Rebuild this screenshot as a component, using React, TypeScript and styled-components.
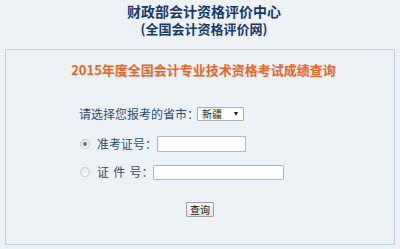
import React, { useState } from "react";
import styled, { createGlobalStyle } from "styled-components";

const GlobalStyle = createGlobalStyle`
  html, body {
    margin: 0;
    padding: 0;
    background: #edf2f7;
  }
  body {
    font-family: "Noto Sans CJK SC", "Noto Sans", sans-serif;
  }
`;

const Page = styled.div`
  width: 400px;
  height: 249px;
  background: #edf2f7;
  display: flex;
  flex-direction: column;
  overflow: hidden;
`;

const Header = styled.div`
  padding: 2px 0 0 8px;
  display: flex;
  flex-direction: column;
  align-items: center;
  color: #17396a;
  font-weight: 700;
`;

const HeaderLine = styled.div<{ $size: number }>`
  font-size: ${(p) => p.$size}px;
  line-height: 18px;
  height: 18px;
  white-space: nowrap;
`;

const Panel = styled.div`
  margin: 11px 5px 0 5px;
  height: 194px;
  border: 1px solid #b6d3e7;
  display: flex;
  flex-direction: column;
`;

const PanelTitle = styled.h2`
  margin: 10px 0 0 0;
  padding-left: 7px;
  text-align: center;
  font-size: 13px;
  line-height: 20px;
  font-weight: 700;
  color: #f1621f;
  white-space: nowrap;
`;

const Form = styled.form`
  padding-left: 73px;
  display: flex;
  flex-direction: column;
`;

const Row = styled.div<{ $mt: number; $indent?: number }>`
  margin-top: ${(p) => p.$mt}px;
  padding-left: ${(p) => p.$indent ?? 0}px;
  height: 18px;
  display: flex;
  align-items: center;
`;

const Label = styled.label<{ $spaced?: boolean }>`
  font-size: 12px;
  color: #2a4c78;
  white-space: pre;
  line-height: 18px;
  word-spacing: ${(p) => (p.$spaced ? "1.5px" : "normal")};
`;

const Radio = styled.input.attrs({ type: "radio" })`
  appearance: none;
  margin: 0 7px 0 0;
  width: 10px;
  height: 10px;
  border-radius: 50%;
  border: 1px solid #c3c8ce;
  background: linear-gradient(#e6e8eb, #fafbfc);
  box-sizing: border-box;
  display: grid;
  place-items: center;

  &:checked::after {
    content: "";
    width: 4px;
    height: 4px;
    border-radius: 50%;
    background: #6b6f75;
  }
`;

const SelectWrap = styled.div`
  position: relative;
  width: 47px;
  height: 14px;
  margin-left: -2px;
  display: flex;
`;

const Select = styled.select`
  appearance: none;
  display: block;
  width: 47px;
  height: 14px;
  margin: 0;
  padding: 0 0 0 4px;
  border: 1px solid #a9adb3;
  border-radius: 1px;
  background: #fff;
  font-family: "Noto Sans CJK SC", sans-serif;
  font-size: 10px;
  line-height: 12px;
  color: #222;
  box-sizing: border-box;
`;

const Arrow = styled.span`
  position: absolute;
  right: 6px;
  top: 5px;
  width: 0;
  height: 0;
  border-left: 2.5px solid transparent;
  border-right: 2.5px solid transparent;
  border-top: 4px solid #222;
  pointer-events: none;
`;

const TextInput = styled.input<{ $w: number; $h: number }>`
  display: block;
  width: ${(p) => p.$w}px;
  height: ${(p) => p.$h}px;
  margin: 0;
  padding: 0 3px;
  border: 1px solid #b2b6bb;
  border-radius: 1px;
  background: #fff;
  box-sizing: border-box;
  font-size: 11px;
`;

const ButtonRow = styled.div`
  margin-top: 21px;
  display: flex;
  justify-content: center;
`;

const Button = styled.button`
  width: 28px;
  height: 15px;
  padding: 0;
  border: 1px solid #9a9ea4;
  border-radius: 1px;
  background: linear-gradient(#fafafa, #e2e3e5);
  font-family: "Noto Sans CJK SC", sans-serif;
  font-size: 10px;
  line-height: 13px;
  color: #111;
  box-sizing: border-box;
`;

const App: React.FC = () => {
  const [mode, setMode] = useState("zkz");

  return (
    <Page>
      <GlobalStyle />
      <Header>
        <HeaderLine $size={14}>财政部会计资格评价中心</HeaderLine>
        <HeaderLine $size={13}>(全国会计资格评价网)</HeaderLine>
      </Header>
      <Panel>
        <PanelTitle>2015年度全国会计专业技术资格考试成绩查询</PanelTitle>
        <Form onSubmit={(e) => e.preventDefault()}>
          <Row $mt={25}>
            <Label>请选择您报考的省市：</Label>
            <SelectWrap>
              <Select defaultValue="xj">
                <option value="xj">新疆</option>
              </Select>
              <Arrow />
            </SelectWrap>
          </Row>
          <Row $mt={12} $indent={1}>
            <Radio name="mode" checked={mode === "zkz"} onChange={() => setMode("zkz")} />
            <Label>准考证号：</Label>
            <TextInput $w={89} $h={16} />
          </Row>
          <Row $mt={10} $indent={1}>
            <Radio name="mode" checked={mode === "zj"} onChange={() => setMode("zj")} />
            <Label $spaced>证 件 号：</Label>
            <TextInput $w={131} $h={15} />
          </Row>
        </Form>
        <ButtonRow>
          <Button type="submit">查询</Button>
        </ButtonRow>
      </Panel>
    </Page>
  );
};

export default App;
